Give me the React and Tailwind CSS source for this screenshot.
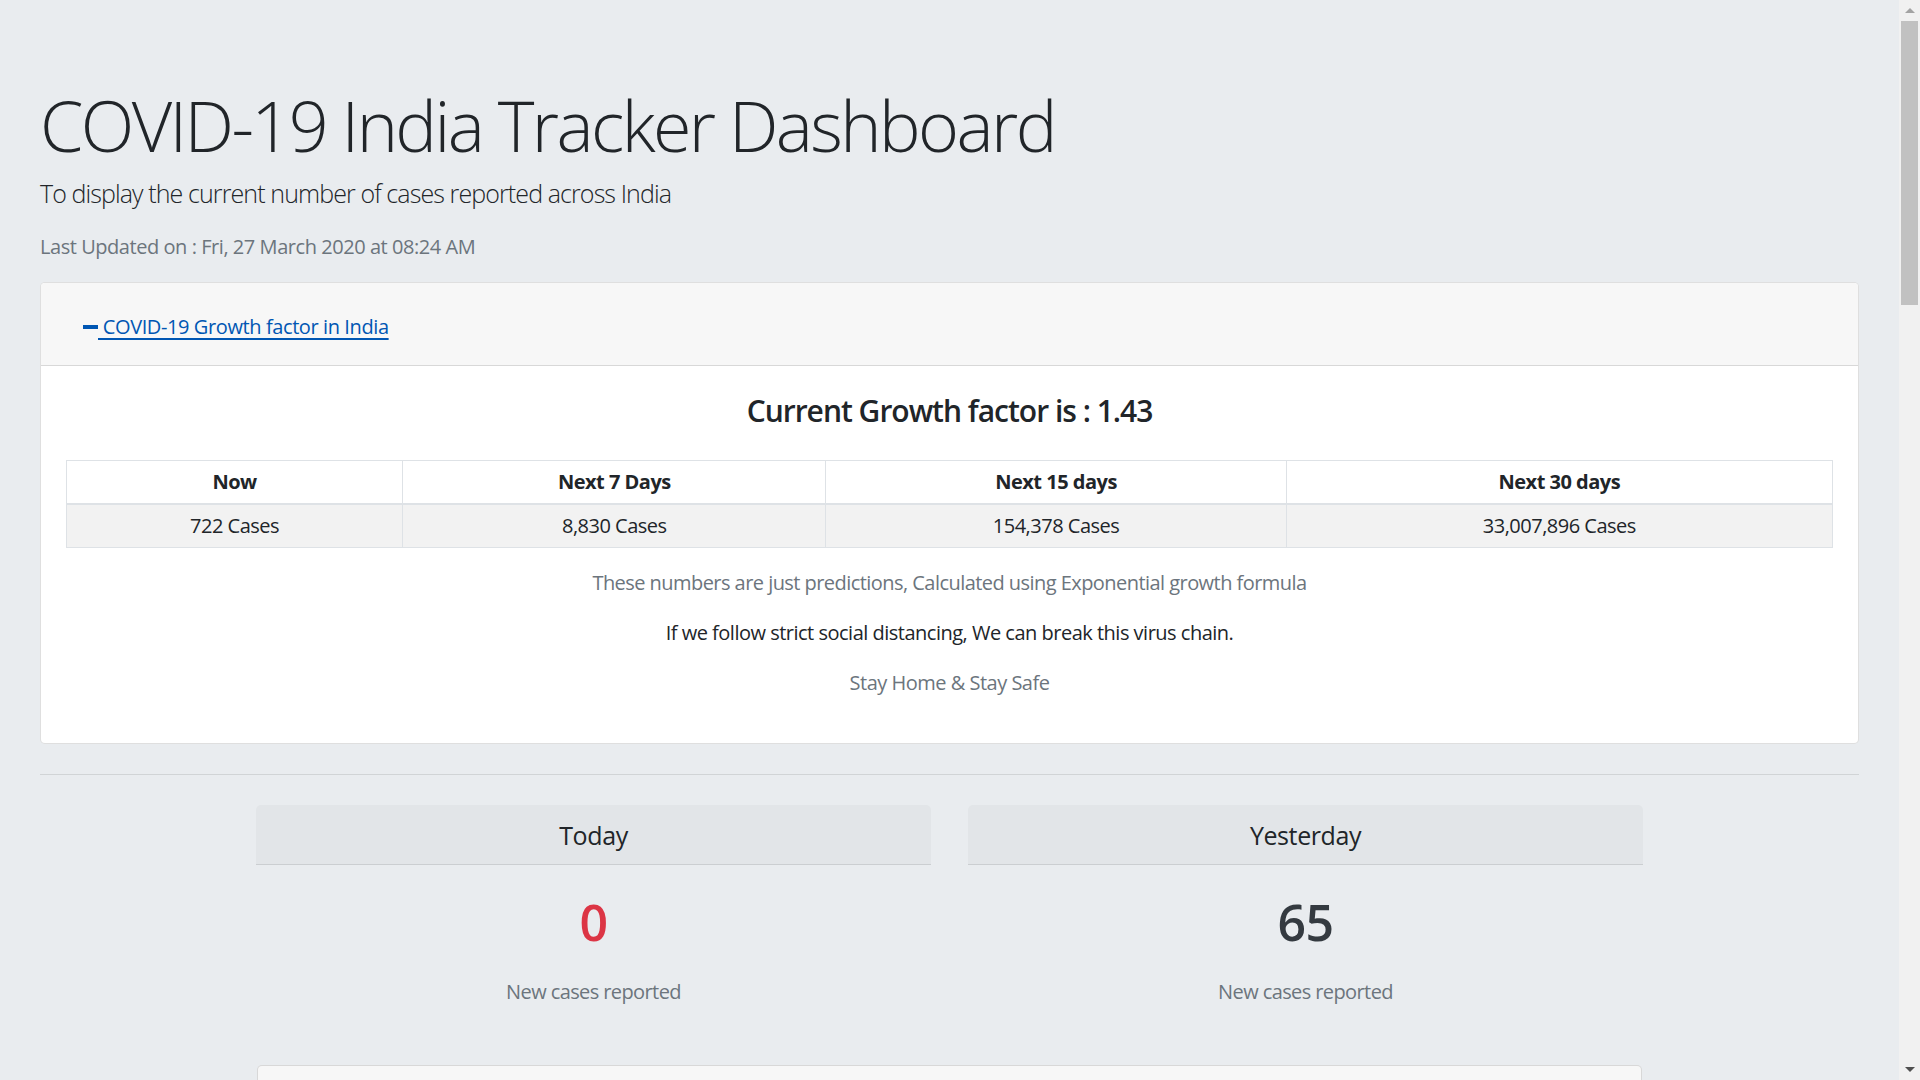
import React from "react";

const cols = [
  { head: "Now", value: "722 Cases", w: "w-[336px]" },
  { head: "Next 7 Days", value: "8,830 Cases", w: "w-[423px]" },
  { head: "Next 15 days", value: "154,378 Cases", w: "w-[460px]" },
  { head: "Next 30 days", value: "33,007,896 Cases", w: "w-[546px]" },
];

function Scrollbar() {
  return (
    <div className="w-[21px] shrink-0 bg-[#f1f1f1] flex flex-col items-center">
      <div className="h-[21px] flex items-center justify-center">
        <div className="w-0 h-0 border-l-[5px] border-r-[5px] border-b-[5px] border-l-transparent border-r-transparent border-b-[#a3a3a3]" />
      </div>
      <div className="w-[17px] h-[284px] bg-[#c1c1c1]" />
      <div className="flex-1" />
      <div className="h-[21px] flex items-center justify-center">
        <div className="w-0 h-0 border-l-[5px] border-r-[5px] border-t-[5px] border-l-transparent border-r-transparent border-t-[#505050]" />
      </div>
    </div>
  );
}

function DayCard({ title, count, color }) {
  return (
    <div className="w-[675px] flex flex-col">
      <div className="h-[60px] flex items-center justify-center bg-[#e2e5e8] border-b border-[#cbced1] rounded-t-[5px]">
        <h5 className="text-[25px] leading-[30px] font-medium tracking-[-0.4px] text-[#212529]">{title}</h5>
      </div>
      <div className="pt-[27px] pb-[25px] flex flex-col items-center">
        <h1 className={`text-[50px] leading-[60px] font-semibold ${color}`}>{count}</h1>
        <p className="mt-[25px] text-[20px] leading-[30px] tracking-[-0.6px] text-[#6c757d]">New cases reported</p>
      </div>
    </div>
  );
}

export default function App() {
  return (
    <div className="h-screen flex bg-[#e9ecef] overflow-hidden font-['Open_Sans',sans-serif] text-[#212529] tracking-[-0.5px]">
      <main className="flex-1 overflow-hidden px-[40px] pt-[83px]">
        <h1 className="text-[70px] leading-[84px] font-light tracking-[-2.6px]">COVID-19 India Tracker Dashboard</h1>
        <p className="mt-[8px] text-[25px] leading-[37px] font-light tracking-[-0.9px]">To display the current number of cases reported across India</p>
        <p className="mt-[20px] text-[20px] leading-[30px] tracking-[-0.45px] text-[#6c757d]">Last Updated on : Fri, 27 March 2020 at 08:24 AM</p>

        <div className="mt-[20px] bg-white border border-black/[.125] rounded-[5px] overflow-hidden">
          <div className="h-[83px] flex items-center pt-[6px] px-[42px] bg-[#f7f7f7] border-b border-black/[.125]">
            <a href="#" className="flex items-center text-[20px] leading-[30px] tracking-[-0.4px] text-[#0056b3]">
              <span className="inline-block w-[15px] h-[4px] bg-[#0056b3]" />
              <span className="underline underline-offset-[4px]">&nbsp;COVID-19 Growth factor in India</span>
            </a>
          </div>
          <div className="px-[25px] pt-[27px] pb-[25px] text-center">
            <h4 className="text-[30px] leading-[36px] font-semibold tracking-[-1px] mb-[31px]">Current Growth factor is : 1.43</h4>
            <table className="w-full border-collapse text-[20px] leading-[30px]">
              <thead>
                <tr>
                  {cols.map((c) => (
                    <th key={c.head} className={`${c.w} py-[6px] font-bold border border-[#dee2e6] border-b-2`}>{c.head}</th>
                  ))}
                </tr>
              </thead>
              <tbody>
                <tr className="bg-[#f2f2f2]">
                  {cols.map((c) => (
                    <td key={c.head} className="py-[6px] border border-[#dee2e6]">{c.value}</td>
                  ))}
                </tr>
              </tbody>
            </table>
            <p className="mt-[20px] text-[20px] leading-[30px] tracking-[-0.55px] text-[#6c757d]">These numbers are just predictions, Calculated using Exponential growth formula</p>
            <p className="mt-[20px] text-[20px] leading-[30px]">If we follow strict social distancing, We can break this virus chain.</p>
            <p className="mt-[20px] mb-[20px] text-[20px] leading-[30px] text-[#6c757d]">Stay Home &amp; Stay Safe</p>
          </div>
        </div>

        <hr className="mt-[30px] border-t border-black/[.1]" />

        <div className="mt-[30px] flex justify-center gap-[37px]">
          <DayCard title="Today" count="0" color="text-[#dc3545]" />
          <DayCard title="Yesterday" count="65" color="text-[#343a40]" />
        </div>

        <div className="mt-[33px] mx-auto w-[1385px] h-[60px] bg-[#f7f7f7] border border-black/[.125] rounded-t-[5px]" />
      </main>
      <Scrollbar />
    </div>
  );
}
